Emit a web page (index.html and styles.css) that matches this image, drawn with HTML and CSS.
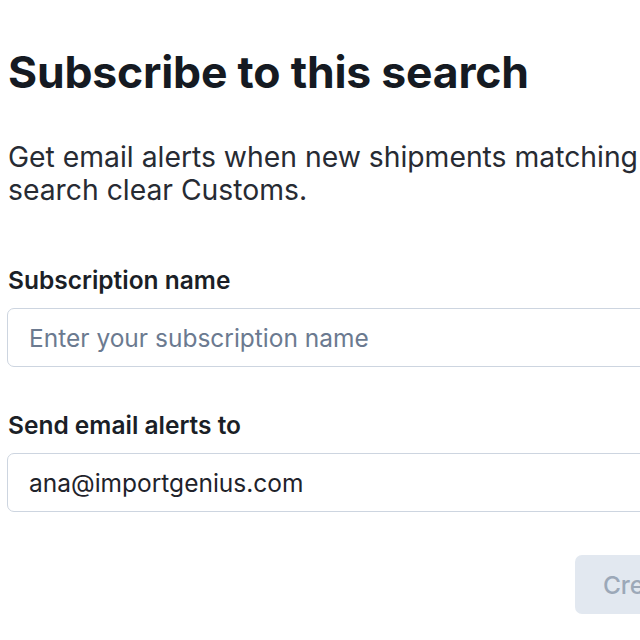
FILE: index.html
```html
<!DOCTYPE html>
<html lang="en">
<head>
<meta charset="utf-8">
<title>Subscribe to this search</title>
<link rel="stylesheet" href="styles.css">
</head>
<body>
  <div class="dialog">
    <h1 class="title">Subscribe to this search</h1>
    <p class="desc">Get email alerts when new shipments matching this search clear Customs.</p>
    <div class="field">
      <label class="label" for="sub-name">Subscription name</label>
      <input class="input" id="sub-name" type="text" placeholder="Enter your subscription name">
    </div>
    <div class="field">
      <label class="label" for="sub-email">Send email alerts to</label>
      <input class="input" id="sub-email" type="text" value="ana@importgenius.com">
    </div>
    <div class="actions">
      <button class="btn" type="button" disabled>Create subscription</button>
    </div>
  </div>
</body>
</html>
```

FILE: styles.css
```css
html, body {
  margin: 0;
  padding: 0;
  background: #ffffff;
  overflow: hidden;
}

body {
  font-family: Inter, "Noto Sans", sans-serif;
  color: #111827;
}

.dialog {
  width: 853px;
  padding: 44px 0 0 8px;
  display: flex;
  flex-direction: column;
}

.title {
  margin: 0;
  font-size: 44.5px;
  line-height: 56px;
  font-weight: 700;
  letter-spacing: -0.2px;
  color: #151a22;
}

.desc {
  margin: 41px 0 0;
  font-size: 28.3px;
  line-height: 33px;
  font-weight: 400;
  color: #272b33;
  max-width: 740px;
}

.field {
  display: flex;
  flex-direction: column;
  gap: 13px;
  margin-top: 58px;
}

.field + .field {
  margin-top: 43px;
}

.label {
  font-size: 24.5px;
  line-height: 30px;
  font-weight: 600;
  color: #1b1f27;
}

.input {
  box-sizing: border-box;
  height: 59px;
  margin-left: -1px;
  padding: 0 21px;
  border: 1.5px solid #cdd5e0;
  border-radius: 7px;
  font-family: inherit;
  font-size: 24.5px;
  color: #1f232b;
  background: #ffffff;
  outline: none;
}

.input::placeholder {
  color: #6b7a90;
}

.actions {
  display: flex;
  justify-content: flex-end;
  margin-top: 43px;
}

.btn {
  box-sizing: border-box;
  height: 59px;
  padding: 0 28px;
  border: none;
  border-radius: 7px;
  background: #e2e8f0;
  color: #9ca8b8;
  font-family: inherit;
  font-size: 24.5px;
  font-weight: 500;
}
```
